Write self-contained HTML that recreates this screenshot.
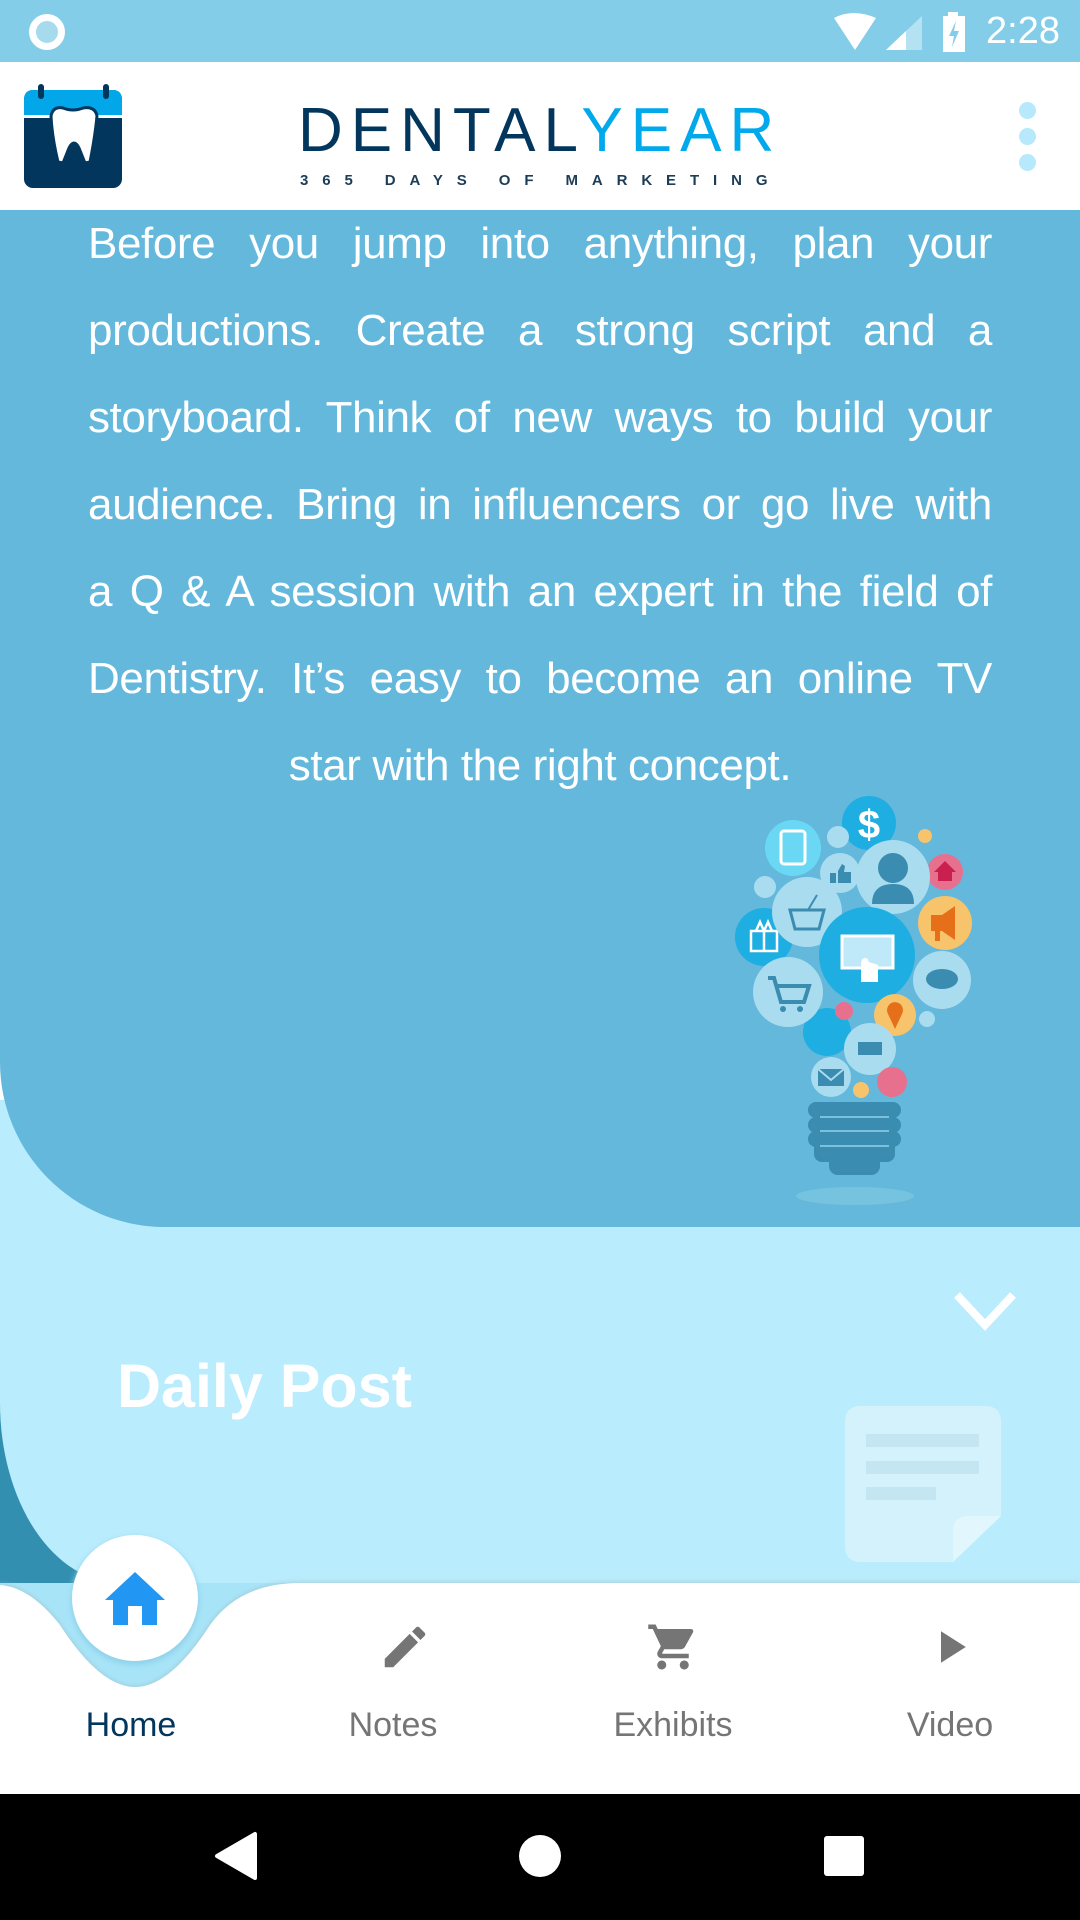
<!DOCTYPE html>
<html><head><meta charset="utf-8"><style>
*{margin:0;padding:0;box-sizing:border-box}
body{width:1080px;height:1920px;position:relative;overflow:hidden;background:#fff;font-family:"Liberation Sans",Roboto,sans-serif}
.abs{position:absolute}
.tx div{text-align:justify;text-align-last:justify;height:87px;white-space:nowrap}
</style></head><body>
<div class="abs" style="left:0;top:0;width:1080px;height:62px;background:#84cde8"></div>
<div class="abs" style="left:29px;top:14px;width:36px;height:36px;border-radius:50%;border:7px solid #fff;background:#a6dbee"></div>
<svg class="abs" style="left:830px;top:12px" width="120" height="40" viewBox="0 0 120 40">
<path d="M4 6 Q23 -4 46 6 L25 38 Z" fill="#fff"/>
<path d="M56 38 L92 4 L92 38 Z" fill="#b5e2f2"/><path d="M56 38 L76 19 L76 38 Z" fill="#fff"/>
</svg>
<svg class="abs" style="left:942px;top:12px" width="26" height="40" viewBox="0 0 26 40"><rect x="6" y="0" width="10" height="5" fill="#fff"/><rect x="1" y="4" width="22" height="36" fill="#fff"/><path d="M14 9 L7 24 L12 24 L10 35 L17 19 L12 19 Z" fill="#84cde8"/></svg>
<div class="abs" style="left:986px;top:8px;font-size:38px;color:#fff;line-height:46px">2:28</div>
<div class="abs" style="left:0;top:62px;width:1080px;height:148px;background:#fff"></div>
<svg class="abs" style="left:23px;top:82px" width="102" height="108" viewBox="0 0 102 108">
<rect x="1" y="8" width="98" height="98" rx="9" fill="#02365c"/>
<path d="M1 18 Q1 8 10 8 L90 8 Q99 8 99 18 L99 33 L1 33 Z" fill="#02a7ea"/>
<rect x="1" y="33" width="98" height="3" fill="#fff"/>
<rect x="15" y="2" width="6" height="15" rx="3" fill="#02365c"/><rect x="80" y="2" width="6" height="15" rx="3" fill="#02365c"/>
<path d="M28 34 Q30 24 40 26 Q50 30 60 26 Q72 24 74 34 Q72 55 67 80 L62 81 L56 66 Q51 56 46 66 L40 81 L35 80 Q29 55 28 34 Z" fill="#fff" stroke="#02365c" stroke-width="3"/>
</svg>
<div class="abs" style="left:298px;top:96px;font-size:62px;letter-spacing:8px;line-height:70px;color:#02365c;font-weight:400">DENTAL<span style="color:#00a8ec">YEAR</span></div>
<div class="abs" style="left:300px;top:172px;font-size:15px;letter-spacing:13.9px;color:#1d3d57;font-weight:700;line-height:18px">365 DAYS OF MARKETING</div>
<div class="abs" style="left:1019px;top:102px;width:17px;height:17px;border-radius:50%;background:#b8e8fb"></div>
<div class="abs" style="left:1019px;top:128px;width:17px;height:17px;border-radius:50%;background:#b8e8fb"></div>
<div class="abs" style="left:1019px;top:154px;width:17px;height:17px;border-radius:50%;background:#b8e8fb"></div>
<div class="abs" style="left:0;top:1350px;width:300px;height:240px;background:#338fb0"></div>
<div class="abs" style="left:0;top:1100px;width:1080px;height:483px;background:#b9ecfd;border-bottom-left-radius:120px 180px"></div>
<div class="abs" style="left:0;top:210px;width:1080px;height:1017px;background:#63b8db;border-bottom-left-radius:165px"></div>
<div class="abs tx" style="left:88px;top:200px;width:904px;font-size:44px;line-height:87px;color:#fff;letter-spacing:-0.4px">
<div>Before you jump into anything, plan your</div>
<div>productions. Create a strong script and a</div>
<div>storyboard. Think of new ways to build your</div>
<div>audience. Bring in influencers or go live with</div>
<div>a Q &amp; A session with an expert in the field of</div>
<div>Dentistry. It’s easy to become an online TV</div>
<div style="text-align:center;text-align-last:center">star with the right concept.</div>
</div>
<svg class="abs" style="left:0;top:0" width="1080" height="1300" viewBox="0 0 1080 1300">
<ellipse cx="855" cy="1196" rx="59" ry="9" fill="#76c3e0"/>
<g fill="#3a8cb0">
<rect x="808" y="1102" width="93" height="16" rx="8"/><rect x="808" y="1117" width="93" height="16" rx="8"/><rect x="808" y="1131" width="93" height="16" rx="8"/>
<rect x="814" y="1140" width="81" height="22" rx="8"/><rect x="829" y="1150" width="51" height="25" rx="9"/>
</g>
<g stroke="#7cc1dc" stroke-width="2"><line x1="820" y1="1117" x2="889" y2="1117"/><line x1="820" y1="1131" x2="889" y2="1131"/><line x1="820" y1="1146" x2="889" y2="1146"/></g>
<circle cx="869" cy="823" r="27" fill="#1eaee2"/>
<text x="869" y="838" font-size="40" font-weight="700" fill="#fff" text-anchor="middle" font-family="Liberation Sans">$</text>
<circle cx="793" cy="848" r="28" fill="#6ad8f5"/>
<rect x="781" y="831" width="24" height="33" rx="3" fill="none" stroke="#fff" stroke-width="3"/>
<circle cx="838" cy="837" r="11" fill="#a9dcef"/>
<circle cx="925" cy="836" r="7" fill="#f7c46c"/>
<circle cx="945" cy="872" r="18" fill="#e8708f"/>
<path d="M934 872 L945 861 L956 872 L952 872 L952 881 L938 881 L938 872 Z" fill="#c92050"/>
<circle cx="840" cy="873" r="20" fill="#a9dcef"/>
<rect x="830" y="873" width="6" height="10" fill="#3a8cb0"/><path d="M838 883 L838 871 L842 864 L845 866 L844 872 L851 872 L851 883 Z" fill="#3a8cb0"/>
<circle cx="893" cy="877" r="37" fill="#a9dcef"/>
<circle cx="893" cy="868" r="15" fill="#3a8cb0"/><path d="M872 904 Q872 884 893 884 Q914 884 914 904 Z" fill="#3a8cb0"/>
<circle cx="765" cy="887" r="11" fill="#a9dcef"/>
<circle cx="764" cy="937" r="29" fill="#1eaee2"/>
<rect x="751" y="931" width="26" height="20" fill="none" stroke="#fff" stroke-width="2.5"/><line x1="764" y1="931" x2="764" y2="951" stroke="#fff" stroke-width="2.5"/><path d="M756 931 L760 922 L764 931 L768 922 L772 931" fill="none" stroke="#fff" stroke-width="2.5"/>
<circle cx="807" cy="912" r="35" fill="#a9dcef"/>
<path d="M790 910 L824 910 L819 929 L795 929 Z" fill="none" stroke="#3a8cb0" stroke-width="3"/><line x1="808" y1="910" x2="817" y2="895" stroke="#3a8cb0" stroke-width="2"/>
<circle cx="945" cy="923" r="27" fill="#f7c46c"/>
<path d="M931 915 L942 915 L955 906 L955 940 L942 931 L931 931 Z" fill="#e6701a"/><rect x="935" y="931" width="5" height="10" fill="#e6701a"/>
<circle cx="867" cy="955" r="48" fill="#1eaee2"/>
<rect x="842" y="936" width="51" height="32" fill="#bfe9f8" stroke="#fff" stroke-width="3"/>
<path d="M861 982 L861 965 Q861 958 865 958 Q869 958 869 965 L869 962 L878 965 L878 982 Z" fill="#fff"/>
<circle cx="827" cy="1032" r="24" fill="#1eaee2"/>
<circle cx="788" cy="992" r="35" fill="#a9dcef"/>
<path d="M768 978 L774 978 L781 1002 L804 1002 L809 986 L776 986" fill="none" stroke="#3a8cb0" stroke-width="4"/><circle cx="783" cy="1009" r="3" fill="#3a8cb0"/><circle cx="800" cy="1009" r="3" fill="#3a8cb0"/>
<circle cx="942" cy="980" r="29" fill="#a9dcef"/>
<ellipse cx="942" cy="979" rx="16" ry="10" fill="#3a8cb0"/>
<circle cx="844" cy="1011" r="9" fill="#e8708f"/>
<circle cx="895" cy="1015" r="21" fill="#f7c46c"/>
<path d="M895 1029 L888 1014 A8 8 0 1 1 902 1014 Z" fill="#e6701a"/>
<circle cx="927" cy="1019" r="8" fill="#a9dcef"/>
<circle cx="870" cy="1049" r="26" fill="#a9dcef"/>
<rect x="858" y="1042" width="24" height="13" fill="#3a8cb0"/>
<circle cx="831" cy="1077" r="20" fill="#a9dcef"/>
<rect x="818" y="1069" width="26" height="17" fill="#3a8cb0"/><path d="M818 1069 L831 1080 L844 1069" fill="none" stroke="#a9dcef" stroke-width="2"/>
<circle cx="861" cy="1090" r="8" fill="#f7c46c"/>
<circle cx="892" cy="1082" r="15" fill="#e8708f"/>
</svg>
<svg class="abs" style="left:952px;top:1290px" width="66" height="42" viewBox="0 0 66 42"><path d="M5 5 L33 35 L61 5" fill="none" stroke="#fff" stroke-width="8"/></svg>
<div class="abs" style="left:117px;top:1350px;font-size:61px;font-weight:700;color:#fff;line-height:72px">Daily Post</div>
<svg class="abs" style="left:845px;top:1406px" width="156" height="156" viewBox="0 0 156 156">
<path d="M16 0 L140 0 Q156 0 156 16 L156 110 L108 156 L16 156 Q0 156 0 140 L0 16 Q0 0 16 0 Z" fill="#d3f2fc"/>
<path d="M108 156 L108 124 Q108 110 124 110 L156 110 Z" fill="#e2f6fd"/>
<rect x="21" y="28" width="113" height="13" fill="#c3e6f2"/><rect x="21" y="55" width="113" height="13" fill="#c3e6f2"/><rect x="21" y="81" width="70" height="13" fill="#c3e6f2"/>
</svg>
<svg class="abs" style="left:0;top:1520px" width="1080" height="275" viewBox="0 0 1080 275">
<defs><filter id="s" x="-10%" y="-50%" width="120%" height="200%"><feGaussianBlur stdDeviation="3"/></filter></defs>
<path d="M0 63 L1080 63 L1080 275 L0 275 Z" fill="#a8e4f8"/>
<path d="M0 65 Q30 67 60 105 Q100 167 135 167 Q170 167 210 105 Q240 63 300 63 L1080 63 L1080 275 L0 275 Z" fill="#9fc4d0" filter="url(#s)"/>
<path d="M0 65 Q30 67 60 105 Q100 167 135 167 Q170 167 210 105 Q240 63 300 63 L1080 63 L1080 275 L0 275 Z" fill="#fff"/>
<circle cx="135" cy="81" r="64" fill="#8fd2ea" filter="url(#s)"/>
<circle cx="135" cy="78" r="63" fill="#fff"/>
<path d="M105 80 L135 52 L165 80 L157 80 L157 105 L142 105 L142 86 L128 86 L128 105 L113 105 L113 80 Z" fill="#2196f3"/>
</svg>
<svg class="abs" style="left:378px;top:1620px" width="54" height="54" viewBox="0 0 24 24"><path d="M3 17.25V21h3.75L17.81 9.94l-3.75-3.75L3 17.25zM20.71 7.04c.39-.39.39-1.02 0-1.41l-2.34-2.34a.996.996 0 0 0-1.41 0l-1.83 1.83 3.75 3.75 1.83-1.83z" fill="#757575"/></svg>
<svg class="abs" style="left:646px;top:1620px" width="54" height="54" viewBox="0 0 24 24"><path d="M7 18c-1.1 0-1.99.9-1.99 2S5.9 22 7 22s2-.9 2-2-.9-2-2-2zM1 2v2h2l3.6 7.59-1.35 2.45c-.16.28-.25.61-.25.96 0 1.1.9 2 2 2h12v-2H7.42c-.14 0-.25-.11-.25-.25l.03-.12.9-1.63h7.45c.75 0 1.41-.41 1.75-1.03l3.58-6.49A1 1 0 0 0 20 4H5.21l-.94-2H1zm16 16c-1.1 0-1.99.9-1.99 2s.89 2 1.99 2 2-.9 2-2-.9-2-2-2z" fill="#757575"/></svg>
<svg class="abs" style="left:923px;top:1620px" width="54" height="54" viewBox="0 0 24 24"><path d="M8 5v14l11-7z" fill="#757575"/></svg>
<div class="abs" style="left:31px;top:1706px;width:200px;text-align:center;font-size:34px;color:#02365c">Home</div>
<div class="abs" style="left:293px;top:1706px;width:200px;text-align:center;font-size:34px;color:#757575">Notes</div>
<div class="abs" style="left:573px;top:1706px;width:200px;text-align:center;font-size:34px;color:#757575">Exhibits</div>
<div class="abs" style="left:850px;top:1706px;width:200px;text-align:center;font-size:34px;color:#757575">Video</div>
<div class="abs" style="left:0;top:1794px;width:1080px;height:126px;background:#000"></div>
<svg class="abs" style="left:0;top:1794px" width="1080" height="126" viewBox="0 0 1080 126">
<path d="M217 62 L255 40 L255 84 Z" fill="#fff" stroke="#fff" stroke-width="4" stroke-linejoin="round"/>
<circle cx="540" cy="62" r="21" fill="#fff"/>
<rect x="824" y="42" width="40" height="40" rx="3" fill="#fff"/>
</svg>
</body></html>
